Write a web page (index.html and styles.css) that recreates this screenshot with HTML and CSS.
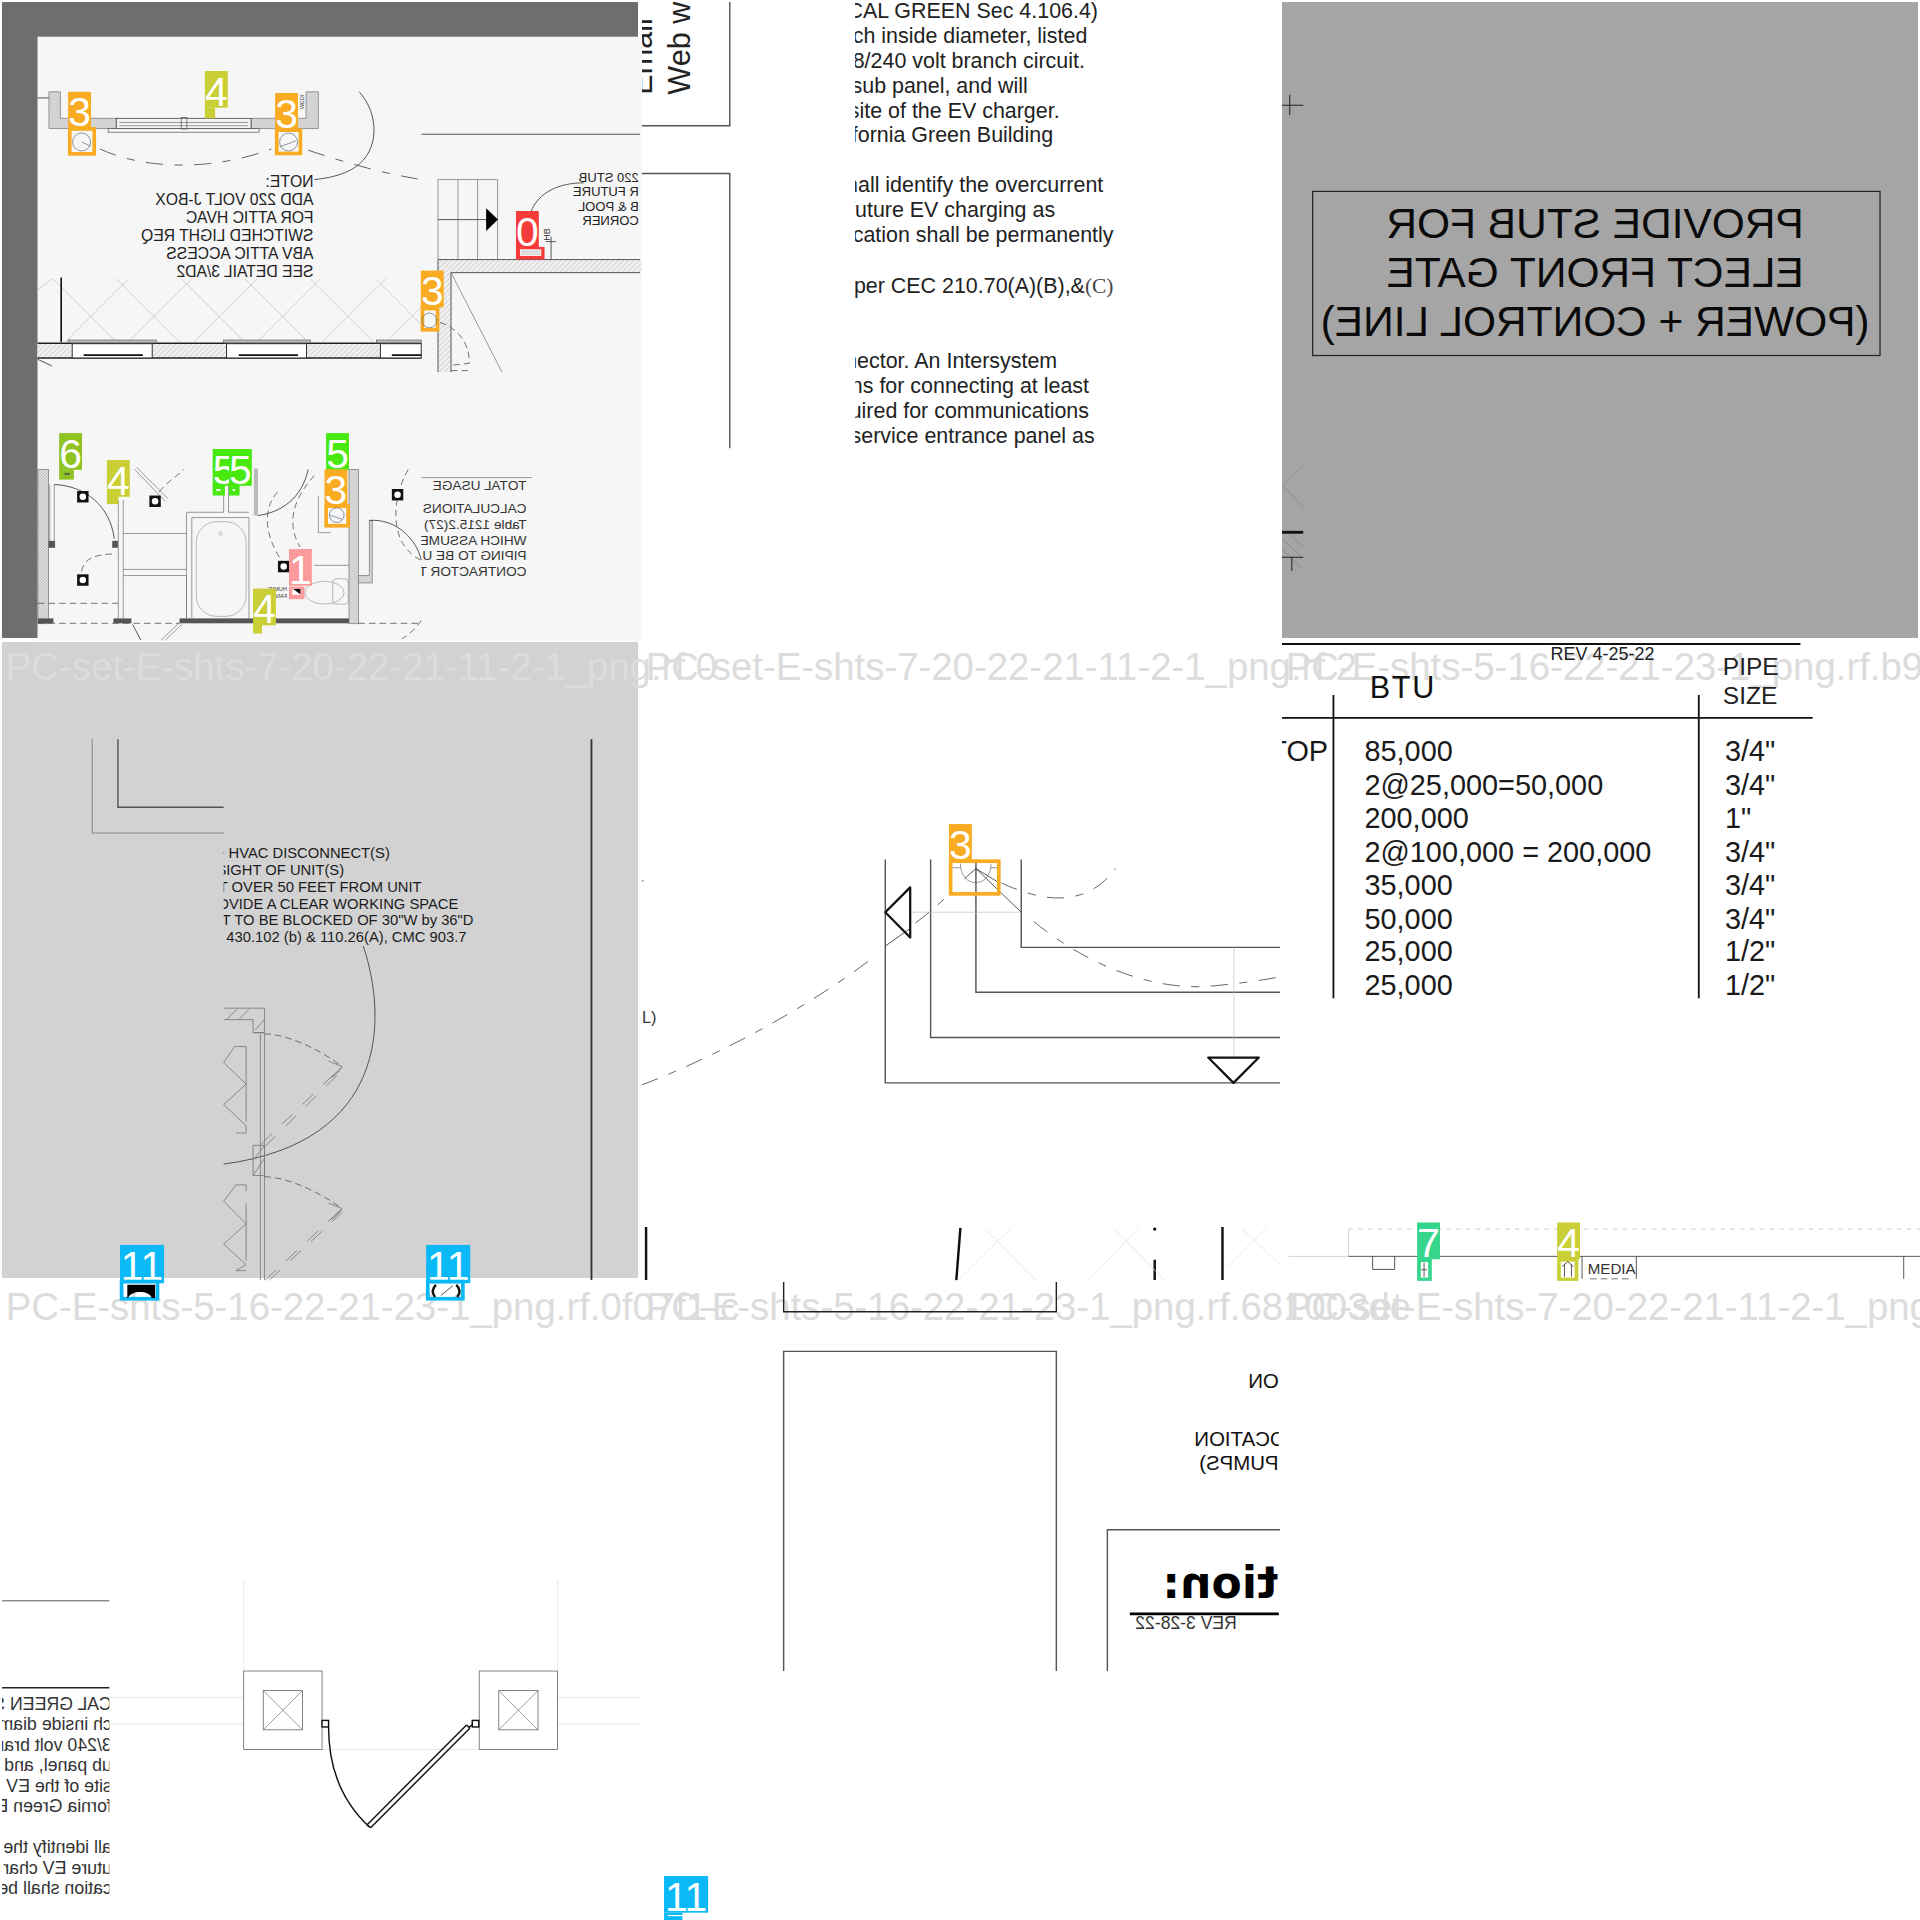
FILE: index.html
```html
<!DOCTYPE html>
<html lang="en">
<head>
<meta charset="utf-8">
<title>Floor plan annotation mosaic</title>
<link rel="stylesheet" href="styles.css">
</head>
<body>
<main class="mosaic">

<!-- tile 1 -->
<section class="tile">
<svg class="plan" viewBox="5 5 1558 1558">
<defs>
<pattern id="hatch" width="9" height="9" patternUnits="userSpaceOnUse" patternTransform="rotate(45)"><rect width="9" height="9" fill="#f0f0f0"/><line x1="0" y1="0" x2="0" y2="9" class="hatch-line"/></pattern>
<pattern id="hatch-dense" width="5" height="5" patternUnits="userSpaceOnUse" patternTransform="rotate(45)"><rect width="5" height="5" fill="#dedede"/><line x1="0" y1="0" x2="0" y2="5" class="hatch-line"/></pattern>
<clipPath id="c1a"><rect x="1032" y="300" width="540" height="612"/></clipPath>
<clipPath id="c1b"><rect x="1032" y="1100" width="300" height="420"/></clipPath>
</defs>
<rect x="5" y="5" width="1558" height="1558" class="bg-dark"/>
<rect x="92" y="90" width="1480" height="1480" class="bg-paper"/>

<!-- top window wall -->
<path class="thin-dk" d="M92 240H120"/>
<path fill="url(#hatch-dense)" class="thin-gr" d="M120 225H148V290H285V315H120Z"/>
<path fill="url(#hatch-dense)" class="thin-gr" d="M780 225H750V290H615V315H780Z"/>
<rect x="285" y="290" width="330" height="25" class="thin-dk-box"/>
<path class="thin-gr" d="M292 300H608M292 308H608"/>
<rect x="265" y="315" width="370" height="9" class="thin-gr-box"/>
<rect x="444" y="288" width="14" height="28" class="thin-gr-box"/>
<text class="tiny" transform="translate(746,268) rotate(-90)">WEDI</text>
<path class="thin-dk" d="M880 225C930 280 930 370 870 410C840 430 800 437 770 440"/>
<path class="dash" d="M245 365C320 400 420 412 520 400C570 394 620 382 665 365"/>
<path class="dash" d="M755 368C850 400 940 425 1032 440"/>

<g transform="translate(768,0) scale(-1,1)">
<text class="note" y="458">NOTE:</text>
<text class="note" y="502">ADD 220 VOLT J-BOX</text>
<text class="note" y="546">FOR ATTIC HVAC</text>
<text class="note" y="590">SWITCHED LIGHT REQ</text>
<text class="note" y="634">ABV ATTIC ACCESS</text>
<text class="note" y="678">SEE DETAIL 3/AD2</text>
</g>

<!-- diamond tile lines -->
<path class="faint" d="M130 683L285 838M285 683L440 838M445 683L600 838M600 683L755 838M760 683L915 838M920 683L1032 795M315 683L160 838M470 683L315 838M630 683L475 838M785 683L630 838M945 683L790 838M1032 752L946 838M92 710L128 683"/>
<path class="heavy" d="M150 680V838"/>
<rect x="92" y="841" width="940" height="36" fill="url(#hatch)"/>
<path class="thick" d="M92 841H1032M92 877H1032"/>
<path class="thin-dk" d="M92 880L128 897"/>
<g>
<rect x="167" y="833" width="216" height="7" class="win-top"/><rect x="177" y="842" width="196" height="35" class="thin-white"/><rect x="547" y="833" width="214" height="7" class="win-top"/><rect x="555" y="842" width="196" height="35" class="thin-white"/><rect x="922" y="833" width="110" height="7" class="win-top"/><rect x="932" y="842" width="100" height="35" class="thin-white"/>
<path class="heavy" d="M205 870H350M585 870H730M960 870H1032"/>
</g>

<!-- stair and wall patch -->
<g clip-path="url(#c1a)">
<path class="thin-dk" d="M1032 329H1568"/>
<path class="thin-gr" d="M1073 440H1219V636M1073 440V636M1122 440V636M1170 440V636"/>
<path class="thin-dk" d="M1073 538H1192"/>
<path class="solid" d="M1191 510L1220 538L1191 566Z"/>
<path fill="url(#hatch)" d="M1073 636H1572V668H1105V912H1073Z"/>
<path class="thin-dk" d="M1073 636H1568M1105 668H1568M1073 636V912M1105 668V912"/>
<path class="thin-gr" d="M1105 668L1230 912"/>
<path class="dash-sm" d="M1078 790C1110 800 1150 830 1150 890L1105 895M1105 908H1148"/>
<path class="thin-dk" d="M1300 520C1320 470 1370 448 1430 448"/>
<path class="thin-dk" d="M1337 592H1362M1350 580V636"/>
<text class="hb" transform="translate(1347,590) rotate(-90)">HB</text>
<g transform="translate(1565,0) scale(-1,1)">
<text class="stub" y="447">220 STUB</text>
<text class="stub" y="481">R FUTURE</text>
<text class="stub" y="516">B &amp; POOL</text>
<text class="stub" y="551">CORNER</text>
</g>
</g>

<!-- lower plan -->
<rect x="93" y="1150" width="26" height="378" fill="url(#hatch-dense)" class="thin-gr"/>
<rect x="855" y="1150" width="23" height="378" fill="url(#hatch-dense)" class="thin-gr"/>
<path class="thin-gr" d="M133 1187V1325M122 1187V1325"/>
<rect x="119" y="1325" width="16" height="17" class="fill-dk"/><rect x="275" y="1325" width="14" height="17" class="fill-dk"/>
<path class="thin-dk" d="M133 1187C210 1190 270 1240 280 1320"/>
<path class="dash-sm" d="M200 1400C205 1370 230 1357 285 1357"/>
<path class="thin-gr" d="M290 1225V1515M302 1225V1515M302 1307H457M302 1395H457M302 1410H457V1515M457 1255V1515M470 1268V1515M470 1268H610M457 1255H548V1188M560 1188V1255H610M610 1268V1515"/>
<path class="thin-gr" d="M330 1150L405 1228M335 1145L412 1222"/>
<path class="dash-sm" d="M390 1205C420 1170 445 1160 450 1150"/>
<rect x="481" y="1278" width="122" height="232" rx="50" class="thin-lt"/>
<circle cx="540" cy="1307" r="4" class="thin-lt"/>
<rect x="622" y="1148" width="10" height="115" class="fill-gr"/>
<path class="thin-dk" d="M632 1263C690 1255 740 1220 755 1150"/>
<path class="dash-sm" d="M680 1205C640 1250 650 1320 695 1380M770 1165C720 1220 700 1280 735 1340"/>
<path class="thin-gr" d="M780 1215V1305H810M770 1385H855"/>
<rect x="440" y="1515" width="415" height="12" class="fill-dk"/>
<rect x="278" y="1515" width="44" height="12" class="fill-dk"/><rect x="93" y="1515" width="38" height="12" class="fill-dk"/>
<path class="dash-sm" d="M93 1478H290M93 1527H440M878 1527H1032"/>
<ellipse cx="795" cy="1452" rx="48" ry="28" class="thin-lt"/><rect x="815" y="1418" width="38" height="62" rx="8" class="thin-lt"/>
<path fill="url(#hatch-dense)" class="thin-gr" d="M878 1410H905V1275H912V1428H878Z"/>
<path class="thin-dk" d="M905 1275C970 1270 1020 1320 1032 1372"/>
<path class="dash-sm" d="M1000 1150C960 1220 950 1330 1030 1372M1032 1520C1020 1540 1000 1555 985 1565"/>
<path class="thin-gr" d="M395 1568L440 1525M405 1568L445 1530"/>
<path class="thin-dk" d="M325 1530L345 1568"/>
<g class="fixture">
<rect x="189" y="1203" width="28" height="28"/><circle cx="203" cy="1217" r="8"/>
<rect x="366" y="1214" width="28" height="28"/><circle cx="380" cy="1228" r="8"/>
<rect x="189" y="1407" width="28" height="28"/><circle cx="203" cy="1421" r="8"/>
<rect x="681" y="1374" width="28" height="28"/><circle cx="695" cy="1388" r="8"/>
<rect x="960" y="1198" width="28" height="28"/><circle cx="974" cy="1212" r="8"/>
</g>
<g clip-path="url(#c1b)">
<path class="thin-gr" d="M1032 1170H1303"/>
<g transform="translate(1290,0) scale(-1,1)">
<text class="usage" y="1200">TOTAL USAGE</text>
<text class="usage" y="1257">CALCULATIONS</text>
<text class="usage" y="1296">Table 1215.2(27)</text>
<text class="usage" y="1335">WHICH ASSUME</text>
<text class="usage" y="1373">PIPING TO BE U</text>
<text class="usage" y="1411">CONTRACTOR T</text>
</g>
</g>
<g transform="translate(703,0) scale(-1,1)">
<text class="tiny" y="1447">HUMID</text>
<text class="tiny" y="1464">FAN</text>
</g>

<!-- annotation labels -->
<rect x="171" y="316" width="60" height="61" class="box orange"/><circle cx="200" cy="348" r="22" class="sym"/><path class="sym" d="M200 348L222 358"/>
<rect x="167" y="225" width="56" height="90" class="tag orange-f"/><text x="195" y="310" class="digit">3</text>
<rect x="502" y="174" width="56" height="90" class="tag olive-f"/><rect x="502" y="264" width="25" height="26" class="tag olive-f"/><text x="530" y="259" class="digit">4</text>
<rect x="678" y="319" width="58" height="57" class="box orange"/><circle cx="707" cy="348" r="22" class="sym"/><path class="sym" d="M685 360L725 345"/>
<rect x="674" y="228" width="56" height="90" class="tag orange-f"/><text x="702" y="313" class="digit">3</text>
<rect x="1264" y="517" width="56" height="90" class="tag red-f"/><rect x="1264" y="605" width="70" height="31" class="tag red-f"/><rect x="1275" y="612" width="50" height="14" class="stripe"/><text x="1292" y="602" class="digit">0</text>
<rect x="1035" y="756" width="37" height="52" class="box orange"/><circle cx="1052" cy="785" r="18" class="sym"/>
<rect x="1031" y="663" width="56" height="90" class="tag orange-f"/><text x="1059" y="748" class="digit">3</text>
<rect x="145" y="1061" width="56" height="90" class="tag lime-f"/><rect x="145" y="1150" width="36" height="25" class="tag lime-f"/><circle cx="161" cy="1161" r="3" class="dot"/><circle cx="168" cy="1161" r="3" class="dot"/><text x="173" y="1146" class="digit">6</text>
<rect x="262" y="1127" width="56" height="90" class="tag olive-f"/><rect x="262" y="1215" width="28" height="20" class="tag olive-f"/><text x="290" y="1212" class="digit">4</text>
<rect x="521" y="1100" width="56" height="90" class="tag green-f"/><rect x="521" y="1188" width="30" height="26" class="tag green-f"/><rect x="530" y="1198" width="10" height="5" class="paper"/><text x="549" y="1185" class="digit">5</text>
<rect x="561" y="1100" width="56" height="90" class="tag green-f"/><rect x="561" y="1188" width="26" height="26" class="tag green-f"/><rect x="570" y="1198" width="6" height="5" class="paper"/><text x="589" y="1185" class="digit">5</text>
<rect x="799" y="1061" width="56" height="90" class="tag green-f"/><text x="827" y="1146" class="digit">5</text>
<rect x="799" y="1240" width="54" height="48" class="box orange"/><circle cx="825" cy="1262" r="18" class="sym"/><path class="sym" d="M808 1262L838 1272"/>
<rect x="795" y="1150" width="56" height="90" class="tag orange-f"/><text x="823" y="1235" class="digit">3</text>
<rect x="708" y="1437" width="38" height="31" class="tag pink-f"/><rect x="716" y="1443" width="20" height="14" class="paper"/><path class="solid" d="M718 1443H736V1456Z"/>
<rect x="708" y="1345" width="56" height="90" class="tag pink-f"/><text x="736" y="1430" class="digit">1</text>
<rect x="620" y="1442" width="56" height="90" class="tag olive-f"/><rect x="620" y="1530" width="22" height="22" class="tag olive-f"/><text x="648" y="1527" class="digit">4</text>
</svg>
</section>

<!-- tile 2 -->
<section class="tile">
<svg class="plan" viewBox="5 5 1558 1558">
<defs><clipPath id="c2a"><rect x="527" y="0" width="800" height="1100"/></clipPath><clipPath id="c2b"><rect x="5" y="5" width="215" height="310"/></clipPath></defs>
<path class="frame" d="M220 5V308H5M5 425H220V1098"/>
<g clip-path="url(#c2b)">
<text class="email" transform="translate(122,232) rotate(-90)">Web w</text>
<text class="email" transform="translate(30,232) rotate(-90)">Email</text>
</g>
<g clip-path="url(#c2a)" class="copy">
<text x="1122" y="45">CAL GREEN Sec 4.106.4)</text>
<text x="1096" y="106">inch inside diameter, listed</text>
<text x="1090" y="167">208/240 volt branch circuit.</text>
<text x="950" y="228">sub panel, and  will</text>
<text x="1028" y="289">site of the EV charger.</text>
<text x="1012" y="349">California Green Building</text>
<text x="1135" y="470">shall identify the overcurrent</text>
<text x="1017" y="532">future EV charging as</text>
<text x="1160" y="592">location shall be permanently</text>
<text x="1160" y="718">per CEC 210.70(A)(B),&amp;<tspan class="serif">(C)</tspan></text>
<text x="1022" y="902">connector. An Intersystem</text>
<text x="1100" y="963">ins for connecting at least</text>
<text x="1100" y="1024">required for communications</text>
<text x="1114" y="1085">service entrance panel as</text>
</g>
</svg>
</section>

<!-- tile 3 -->
<section class="tile">
<svg class="plan" viewBox="5 5 1558 1558">
<rect x="5" y="5" width="1558" height="1558" class="bg-mid"/>
<rect x="80" y="469" width="1390" height="402" class="stub-box"/>
<g transform="translate(772,0) scale(-1,1)">
<text class="stub-text" y="583">PROVIDE STUB FOR</text>
<text class="stub-text" y="703">ELECT FRONT GATE</text>
<text class="stub-text" y="823">(POWER + CONTROL LINE)</text>
</g>
<path class="thin-blk" d="M5 258H57M24 232V282"/>
<path class="thin-mid" d="M57 1140L7 1190L57 1243"/>
<path class="bar" d="M5 1304H57"/>
<path class="thin-mid" d="M5 1320L57 1368M25 1310L57 1340M5 1345L57 1395"/>
<path class="thin-blk" d="M5 1365H57M29 1365V1398"/>
</svg>
</section>

<!-- tile 4 -->
<section class="tile">
<svg class="plan" viewBox="5 5 1558 1558">
<defs><clipPath id="c4a"><rect x="548" y="500" width="800" height="260"/></clipPath></defs>
<rect x="5" y="5" width="1558" height="1558" class="bg-light"/>
<text x="14" y="98" class="mark">PC-set-E-shts-7-20-22-21-11-2-1_png.rf.0</text>
<path class="thin-gr4" d="M226 243V473H548"/>
<path class="frame" d="M289 243V410H548"/>
<path class="heavy-dk" d="M1449 243V1568"/>
<g clip-path="url(#c4a)" class="hvac">
<text x="955" y="535">the HVAC DISCONNECT(S)</text>
<text x="843" y="576">IN SIGHT OF UNIT(S)</text>
<text x="1033" y="617">NOT OVER 50 FEET FROM UNIT</text>
<text x="1123" y="658">PROVIDE A CLEAR WORKING SPACE</text>
<text x="1160" y="699">NOT TO BE BLOCKED OF 30"W by 36"D</text>
<text x="1143" y="740">CEC: 430.102 (b) &amp; 110.26(A), CMC 903.7</text>
</g>
<path class="thin-dk" d="M890 750C950 930 950 1230 548 1284"/>
<path class="thin-gr4" d="M548 902H648V962M620 930V962H648M548 930H620M555 930L580 905M585 930L610 905M625 955L648 930"/>
<path class="thin-gr4" d="M620 962H648M638 965V1568M648 965V1568M620 1238H648V1312H620ZM620 1312L648 1270M620 1275L648 1238"/>
<path class="dash-sm" d="M648 965C700 965 780 1000 838 1045M648 1315C700 1315 780 1350 838 1393"/>
<path class="thin-gr4" d="M805 1032L838 1045L808 1075M815 1072L838 1048M805 1380L838 1393L808 1422M815 1420L838 1396"/>
<path class="dash-dbl" d="M640 1235L838 1045M650 1240L838 1055M650 1568L838 1393M660 1568L838 1403"/>
<path class="thin-gr4" d="M603 996H575L548 1035L603 1088L548 1138L603 1190V1208H578M603 996V1180M603 1335H578L548 1375L603 1430L548 1480L603 1530L578 1545H603M603 1335V1350M603 1380V1520"/>
<rect x="294" y="1482" width="108" height="90" class="tag blue-f"/><text x="348" y="1567" class="digit">11</text>
<rect x="1044" y="1482" width="108" height="90" class="tag blue-f"/><text x="1098" y="1567" class="digit">11</text>
</svg>
</section>

<!-- tile 5 -->
<section class="tile">
<svg class="plan" viewBox="5 5 1558 1558">
<text x="14" y="98" class="mark">PC-set-E-shts-7-20-22-21-11-2-1_png.rf.2</text>
<path class="frame" d="M601 538V1085H1568M712 538V974H1568M823 538V863H1568M934 538V753H1568"/>
<path class="faint" d="M1455 753V1023M662 667H934"/>
<path class="thin-dk" d="M934 667L823 560L795 585M823 560L880 595M601 750L660 708"/>
<path class="tri" d="M662 606L601 667L662 729Z"/>
<path class="tri" d="M1392 1023H1516L1454 1085Z"/>
<path class="dash" d="M5 1090C200 1015 420 895 575 775M675 693C700 675 730 650 755 625"/>
<path class="dash" d="M885 595C950 625 1080 675 1165 560"/>
<path class="dash" d="M965 690C1100 800 1260 860 1400 848C1460 842 1520 835 1568 825"/>
<path class="sym" d="M785 548C785 610 860 610 860 548M765 558H785M860 558H875"/>
<rect x="761" y="542" width="118" height="80" class="box orange"/>
<rect x="757" y="451" width="56" height="90" class="tag orange-f"/><text x="785" y="536" class="digit">3</text>
<text x="5" y="938" class="ell">L)</text>
<path class="heavy-blk" d="M15 1438V1568M1427 1438V1568"/>
<path class="heavy-blk" d="M785 1440L775 1568M1261 1518V1568"/>
<circle cx="1261" cy="1443" r="4" class="solid"/>
<path class="faintest" d="M845 1443L970 1568M910 1440L780 1568M1158 1440L1285 1568M1222 1440L1100 1568M1475 1443L1568 1530M1535 1440L1440 1535"/>
<circle cx="7" cy="590" r="1.5" class="solid"/>
</svg>
</section>

<!-- tile 6 -->
<section class="tile">
<svg class="plan" viewBox="5 5 1558 1558">
<defs><clipPath id="c6a"><rect x="5" y="200" width="120" height="120"/></clipPath></defs>
<text x="14" y="98" class="mark">PC-E-shts-5-16-22-21-23-1_png.rf.b9</text>
<path class="table-line" d="M5 10H1275M5 191H1305M131 135V878M1026 135V878"/>
<text x="663" y="50" class="rev">REV 4-25-22</text>
<text x="220" y="143" class="btu">BTU</text>
<text x="1085" y="85" class="pipe">PIPE</text>
<text x="1085" y="158" class="pipe">SIZE</text>
<g clip-path="url(#c6a)"><text x="118" y="297" class="cell end">TOP</text></g>
<g class="cell">
<text x="207" y="297">85,000</text>
<text x="207" y="379">2@25,000=50,000</text>
<text x="207" y="461">200,000</text>
<text x="207" y="543">2@100,000 = 200,000</text>
<text x="207" y="625">35,000</text>
<text x="207" y="707">50,000</text>
<text x="207" y="787">25,000</text>
<text x="207" y="869">25,000</text>
<text x="1090" y="297">3/4"</text>
<text x="1090" y="379">3/4"</text>
<text x="1090" y="461">1"</text>
<text x="1090" y="543">3/4"</text>
<text x="1090" y="625">3/4"</text>
<text x="1090" y="707">3/4"</text>
<text x="1090" y="787">1/2"</text>
<text x="1090" y="869">1/2"</text>
</g>
<path class="thin-dash" d="M168 1443H1568"/>
<path class="faint" d="M168 1443V1510M20 1510H168"/>
<path class="thin-dk" d="M168 1510H1568M227 1510V1542H281V1510M1528 1510V1565M740 1510V1565M873 1510V1565"/>
<path class="dash-sm" d="M760 1565H860"/>
<text x="754" y="1553" class="media">MEDIA</text>
<rect x="336" y="1427" width="56" height="90" class="tag teal-f"/><rect x="336" y="1516" width="36" height="54" class="tag teal-f"/><rect x="345" y="1524" width="18" height="38" class="paper"/><path class="thin-dk" d="M353 1526V1560M346 1543H360"/><text x="364" y="1512" class="digit">7</text>
<rect x="679" y="1427" width="56" height="90" class="tag olive-f"/><rect x="679" y="1515" width="52" height="55" class="tag olive-f"/><rect x="688" y="1523" width="34" height="39" class="paper"/><path class="thin-dk" d="M697 1530V1560M714 1530V1560M691 1535L705 1523L719 1535"/><text x="707" y="1512" class="digit">4</text>
</svg>
</section>

<!-- tile 7 -->
<section class="tile">
<svg class="plan" viewBox="5 5 1558 1558">
<defs><clipPath id="c7a"><rect x="5" y="1005" width="263" height="540"/></clipPath></defs>
<text x="14" y="98" class="mark">PC-E-shts-5-16-22-21-23-1_png.rf.0f07f1-c</text>
<rect x="294" y="0" width="108" height="8" class="tag blue-f"/>
<rect x="298" y="4" width="88" height="42" class="box blue"/>
<path class="solid" d="M312 12H380V44H372C365 25 322 25 314 44H312Z"/>
<rect x="1044" y="0" width="108" height="8" class="tag blue-f"/>
<rect x="1048" y="4" width="86" height="42" class="box blue"/>
<path class="heavy-blk" d="M1068 12C1058 22 1058 32 1066 42M1118 12C1128 22 1128 32 1120 42"/>
<path class="thin-dk" d="M1080 38L1110 14"/>
<path class="thin-dk" d="M5 786H268"/>
<path class="thick" d="M5 999H268"/>
<g clip-path="url(#c7a)">
<g transform="translate(274,0) scale(-1,1)" class="copy-m">
<text y="1053">CAL GREEN Sec</text>
<text y="1103">ch inside diam</text>
<text y="1153">3/240 volt bran</text>
<text y="1204">ub panel, and</text>
<text y="1254">site of the EV c</text>
<text y="1304">fornia Green B</text>
<text y="1405">all identify the</text>
<text y="1455">uture EV char</text>
<text y="1505">cation shall be</text>
</g>
</g>
<path class="faintest" d="M597 735V958M1366 735V958M268 1023H597M268 1088H597M1366 1023H1568M1366 1088H1568M789 1150H1174"/>
<rect x="597" y="958" width="192" height="192" class="thin-gr-box"/>
<rect x="645" y="1006" width="96" height="96" class="thin-gr-box"/><path class="thin-gr" d="M645 1006L741 1102M741 1006L645 1102"/>
<rect x="1174" y="958" width="192" height="192" class="thin-gr-box"/>
<rect x="1222" y="1006" width="96" height="96" class="thin-gr-box"/><path class="thin-gr" d="M1222 1006L1318 1102M1318 1006L1222 1102"/>
<rect x="789" y="1079" width="16" height="16" class="hinge"/>
<rect x="1157" y="1079" width="16" height="16" class="hinge"/>
<path class="door" d="M805 1095C805 1200 840 1280 905 1340"/>
<path class="door" d="M899 1335L1143 1090M908 1342L1151 1098M899 1335L908 1342M1143 1090L1151 1098M1150 1095L1157 1090"/>
</svg>
</section>

<!-- tile 8 -->
<section class="tile">
<svg class="plan" viewBox="5 5 1558 1558">
<defs><clipPath id="c8a"><rect x="1100" y="200" width="465" height="760"/></clipPath></defs>
<text x="14" y="98" class="mark">PC-E-shts-5-16-22-21-23-1_png.rf.681003de</text>
<path class="frame-blk" d="M352 5V78H1020V5"/>
<path class="frame" d="M352 958V175H1020V958"/>
<path class="frame" d="M1145 958V612H1568"/>
<g clip-path="url(#c8a)">
<g transform="translate(1490,0) scale(-1,1)"><text class="loc end" y="265">ON</text></g>
<g transform="translate(1358,0) scale(-1,1)"><text class="loc end" y="407">LOCATION</text></g>
<g transform="translate(1370,0) scale(-1,1)"><text class="loc end" y="466">(PUMPS)</text></g>
<g transform="translate(1280,0) scale(-1,1)"><text class="tion end" y="780">ation:</text></g>
<path class="thick-bk" d="M1200 818H1568"/>
<g transform="translate(1462,0) scale(-1,1)"><text class="rev3" y="855">REV 3-28-22</text></g>
</g>
<rect x="59" y="1460" width="108" height="90" class="tag blue-f"/><rect x="59" y="1550" width="45" height="20" class="tag blue-f"/><path class="under" d="M68 1557H104"/><text x="113" y="1545" class="digit">11</text>
</svg>
</section>

<!-- tile 9 -->
<section class="tile">
<svg class="plan" viewBox="5 5 1558 1558">
<text x="14" y="98" class="mark">PC-set-E-shts-7-20-22-21-11-2-1_png.rf.c1</text>
</svg>
</section>

</main>
</body>
</html>
```

FILE: styles.css
```css
html, body { margin: 0; padding: 0; background: #fff; }
.mosaic {
  display: grid;
  grid-template-columns: repeat(3, 640px);
  grid-template-rows: repeat(3, 640px);
  width: 1920px;
  height: 1920px;
  overflow: hidden;
}
.tile { padding: 2px; box-sizing: border-box; }
.plan { display: block; width: 636px; height: 636px; overflow: visible; font-family: "Liberation Sans", Arial, sans-serif; }

:where(path:not([fill])) { fill: none; }

.bg-dark { fill: #6e6e6e; }
.bg-paper { fill: #f6f6f6; }
.bg-mid { fill: #a5a5a5; }
.bg-light { fill: #d2d2d2; }

.mark { font-size: 94px; fill: #dcdcdc; }

.hatch-line { stroke: #9a9a9a; stroke-width: 1.6; }
.thin-dk { stroke: #444; stroke-width: 2.2; }
.thin-gr { stroke: #777; stroke-width: 1.8; }
.thin-gr4 { stroke: #777; stroke-width: 2; }
.thin-lt { stroke: #aaa; stroke-width: 2; fill: none; }
.thin-mid { stroke: #888; stroke-width: 2; }
.thin-blk { stroke: #222; stroke-width: 2.5; }
.thin-dash { stroke: #aaa; stroke-width: 1.5; stroke-dasharray: 10 14; }
.thin-dk-box { fill: #f4f4f4; stroke: #444; stroke-width: 2; }
.thin-gr-box { fill: none; stroke: #666; stroke-width: 2; }
.thin-white { fill: #fff; stroke: #333; stroke-width: 2.5; }
.win-top { fill: #bbb; stroke: #555; stroke-width: 1.5; }
.faint { stroke: #bbb; stroke-width: 1.6; }
.faintest { stroke: #e4e4e4; stroke-width: 2; }
.dash { stroke: #444; stroke-width: 2; stroke-dasharray: 42 28 20 28; }
.dash-sm { stroke: #555; stroke-width: 2; stroke-dasharray: 16 10; }
.dash-dbl { stroke: #777; stroke-width: 2; stroke-dasharray: 36 34; }
.heavy { stroke: #111; stroke-width: 4; }
.heavy-dk { stroke: #333; stroke-width: 4.5; }
.heavy-blk { stroke: #111; stroke-width: 6; }
.thick { stroke: #222; stroke-width: 3.5; }
.thick-bk { stroke: #000; stroke-width: 7; }
.frame { stroke: #555; stroke-width: 3.5; }
.frame-blk { stroke: #222; stroke-width: 3.5; }
.solid { fill: #000; }
.fill-dk { fill: #555; }
.fill-gr { fill: #bbb; }
.tri { stroke: #111; stroke-width: 5.5; stroke-linejoin: round; }
.bar { stroke: #111; stroke-width: 7; }
.door { stroke: #111; stroke-width: 3.5; }
.hinge { fill: #fff; stroke: #111; stroke-width: 3.5; }
.table-line { stroke: #111; stroke-width: 4.5; }
.stub-box { fill: none; stroke: #222; stroke-width: 3; }
.under { stroke: #fff; stroke-width: 3; }

.fixture rect { fill: #111; }
.fixture circle { fill: #fff; }
.sym { stroke: #567; stroke-width: 1.6; fill: none; }
.dot { fill: #555; }
.paper { fill: #fff; }
.stripe { fill: #ddd; stroke: #fff; stroke-width: 2; }

.tag { stroke: none; }
.box { fill: none; stroke-width: 9; }
.orange { stroke: #f9ab22; }
.blue { stroke: #0bb9f6; }
.orange-f { fill: #f9ab22; }
.olive-f { fill: #c9cf34; }
.red-f { fill: #f63b3b; }
.lime-f { fill: #8fc322; }
.green-f { fill: #48e811; }
.pink-f { fill: #fb9a9a; }
.blue-f { fill: #0bb9f6; }
.teal-f { fill: #36d58c; }
.digit { font-size: 100px; fill: #fff; text-anchor: middle; }

.note { font-size: 38.5px; fill: #222; }
.stub { font-size: 32px; fill: #222; }
.usage { font-size: 33.5px; fill: #333; }
.tiny { font-size: 14px; fill: #333; }
.hb { font-size: 22px; fill: #333; }

.copy text { font-size: 52.5px; fill: #222; text-anchor: end; }
.serif { font-family: "Liberation Serif", serif; fill: #444; }
.email { font-size: 75px; fill: #222; }
.stub-text { font-size: 104px; fill: #0a0a0a; text-anchor: middle; }
.hvac text { font-size: 36.2px; fill: #1c1c1c; text-anchor: end; }
.ell { font-size: 40px; fill: #333; }

.rev { font-size: 44px; fill: #222; }
.btu { font-size: 75px; fill: #111; letter-spacing: 4px; }
.pipe { font-size: 60px; fill: #222; }
.cell, .cell text { font-size: 70.7px; fill: #1a1a1a; }
.end { text-anchor: end; }
.media { font-size: 37px; fill: #333; }

.copy-m text { font-size: 43.5px; fill: #333; }
.loc { font-size: 50px; fill: #111; }
.tion { font-family: "DejaVu Sans", sans-serif; font-weight: 700; font-size: 108px; fill: #000; }
.rev3 { font-size: 43px; fill: #333; }
```
